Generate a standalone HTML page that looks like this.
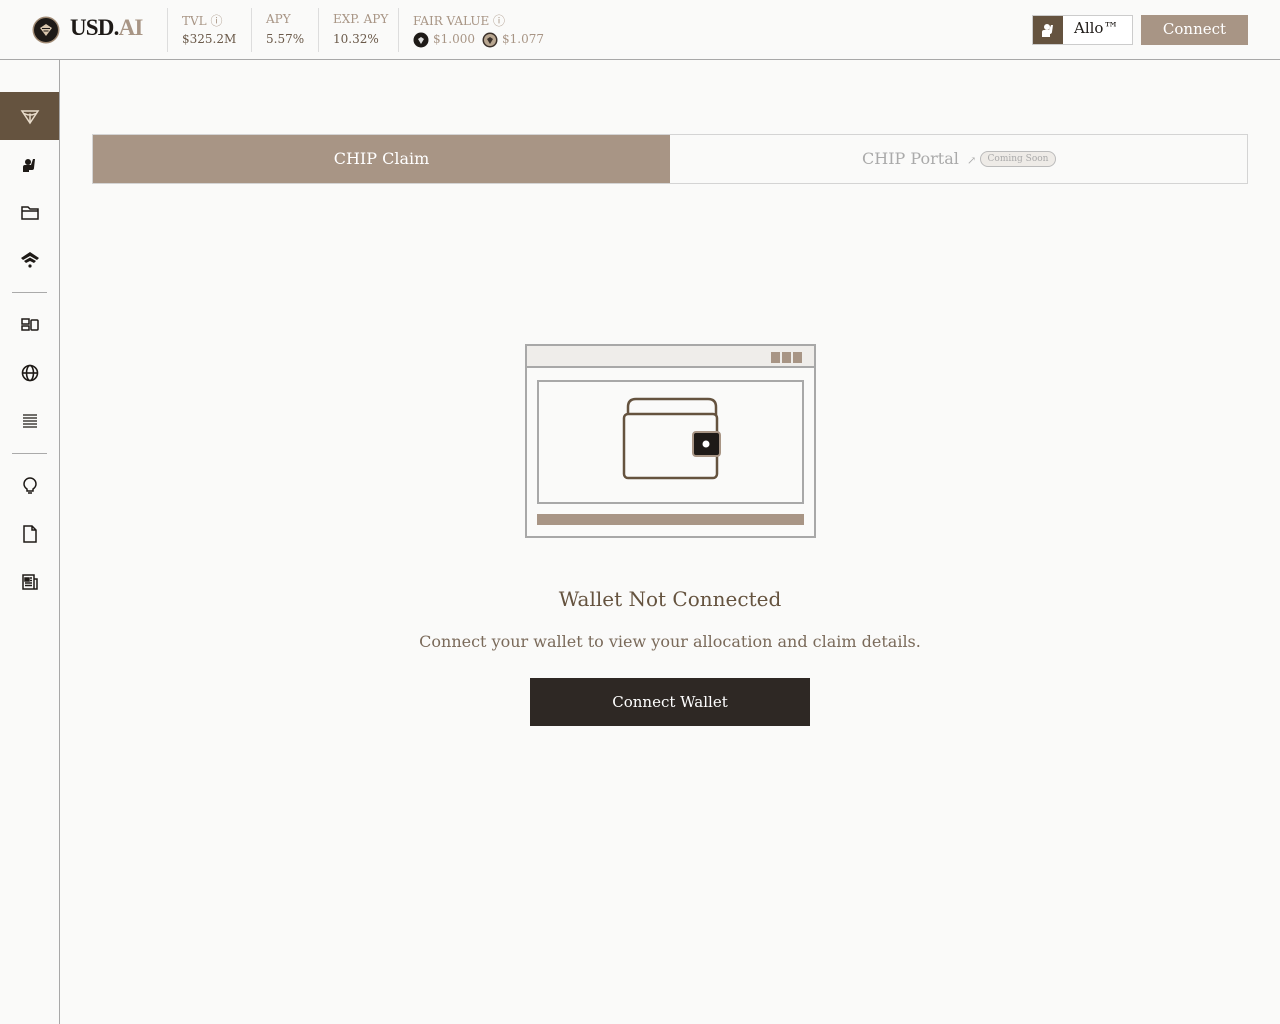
<!DOCTYPE html>
<html><head><meta charset="utf-8"><style>
*{margin:0;padding:0;box-sizing:border-box}
body{width:1280px;height:1024px;background:#fafaf9;font-family:"DejaVu Serif","Liberation Serif",serif;position:relative;overflow:hidden;color:#333}
.top{position:absolute;left:0;top:0;width:1280px;height:60px;border-bottom:1px solid #a8a8a8;background:#fafaf9}
.side{position:absolute;left:0;top:60px;width:60px;height:964px;border-right:1px solid #a8a8a8}
.abs{position:absolute;white-space:nowrap}
.lbl{font-size:12px;color:#a89585}
.val{font-size:12px;color:#6b5a4a}
.vsep{position:absolute;top:8px;width:1px;height:44px;background:#ddd}
.ic{position:absolute;left:20px;width:20px;height:20px}
</style></head><body>
<div class="top">
  <svg class="abs" style="left:32px;top:16px" width="28" height="28" viewBox="0 0 28 28"><circle cx="14" cy="14" r="13.5" fill="#a08a74"/><circle cx="14" cy="14" r="12" fill="#1e1a17"/><path d="M8 12 L14 8 L20 12 L14 20 Z" fill="#d9c6ad"/><path d="M10 12.5h8M11.5 15h5" stroke="#1e1a17" stroke-width="1"/></svg>
  <div class="abs" style="left:70px;top:15px;font-size:23px;letter-spacing:-0.8px;color:#1e1a17;font-weight:bold;font-family:'Liberation Serif',serif">USD.<span style="color:#a89585">AI</span></div>
  <div class="vsep" style="left:167px"></div>
  <div class="abs lbl" style="left:182px;top:12px">TVL ⓘ</div><div class="abs val" style="left:182px;top:32px">$325.2M</div>
  <div class="vsep" style="left:251px"></div>
  <div class="abs lbl" style="left:266px;top:12px">APY</div><div class="abs val" style="left:266px;top:32px">5.57%</div>
  <div class="vsep" style="left:318px"></div>
  <div class="abs lbl" style="left:333px;top:12px">EXP. APY</div><div class="abs val" style="left:333px;top:32px">10.32%</div>
  <div class="vsep" style="left:398px"></div>
  <div class="abs lbl" style="left:413px;top:12px">FAIR VALUE ⓘ</div>
  <svg class="abs" style="left:413px;top:32px" width="16" height="16"><circle cx="8" cy="8" r="7.5" fill="#1e1a17"/><path d="M5 7l3-2 3 2-3 5z" fill="#ddd"/></svg>
  <div class="abs" style="left:433px;top:32px;font-size:12px;color:#a89585">$1.000</div>
  <svg class="abs" style="left:482px;top:32px" width="16" height="16"><circle cx="8" cy="8" r="7.5" fill="#3a3029"/><circle cx="8" cy="8" r="6" fill="#b8a690"/><path d="M5 7l3-2 3 2-3 5z" fill="#3a3029"/></svg>
  <div class="abs" style="left:502px;top:32px;font-size:12px;color:#a89585">$1.077</div>
  <div class="abs" style="left:1032px;top:15px;width:101px;height:30px;border:1px solid #ccc;background:#fff"></div>
  <div class="abs" style="left:1033px;top:16px;width:30px;height:28px;background:#65533f"></div>
  <svg class="abs" style="left:1040px;top:21px" width="16" height="18"><circle cx="7" cy="6" r="3" fill="#fff"/><path d="M2 16v-5c0-1.5 1-2 2-2h5l2-5h2l-1 7c0 1-1 2-2 2v3z" fill="#fff"/></svg>
  <div class="abs" style="left:1074px;top:19px;font-size:15px;color:#1e1a17">Allo™</div>
  <div class="abs" style="left:1141px;top:15px;width:107px;height:30px;background:#a89585;color:#fff;font-size:15px;text-align:center;line-height:28px">Connect</div>
</div>
<div class="side">
  <div class="abs" style="left:0;top:32px;width:59px;height:48px;background:#65533f"></div>
  <svg class="ic" style="top:46px" viewBox="0 0 20 20" fill="none" stroke="#e8dccb" stroke-width="1.5"><path d="M2 5h16L10 17z"/><path d="M4 7.5q6 3 12 0M10 7.5v9"/></svg>
  <svg class="ic" style="top:95px" viewBox="0 0 20 20" fill="#1e1a17"><circle cx="8" cy="7" r="3"/><path d="M3 17v-5q0-2 2-2h6l2-6h2l-1 9q0 2-2 2H9v2z"/></svg>
  <svg class="ic" style="top:142px" viewBox="0 0 20 20" fill="none" stroke="#1e1a17" stroke-width="1.5"><path d="M2 5h6l2 2h8v10H2zM2 9h16"/></svg>
  <svg class="ic" style="top:190px" viewBox="0 0 20 20" fill="#1e1a17"><path d="M1 8l9-6 9 6-2 2-7-4-7 4z"/><path d="M4 11l6-3.5 6 3.5-2 2-4-2-4 2z"/><circle cx="10" cy="16" r="1.6"/></svg>
  <div class="abs" style="left:12px;top:232px;width:35px;height:1px;background:#aaa"></div>
  <svg class="ic" style="top:255px" viewBox="0 0 20 20" fill="none" stroke="#1e1a17" stroke-width="1.5"><rect x="2" y="4" width="7" height="5"/><rect x="2" y="11" width="7" height="4"/><rect x="11" y="5" width="7" height="10" rx="1"/></svg>
  <svg class="ic" style="top:303px" viewBox="0 0 20 20" fill="none" stroke="#1e1a17" stroke-width="1.6"><circle cx="10" cy="10" r="7.5"/><ellipse cx="10" cy="10" rx="3.5" ry="7.5"/><path d="M2.5 10h15"/></svg>
  <svg class="ic" style="top:351px" viewBox="0 0 20 20" stroke="#1e1a17" stroke-width="1.3"><path d="M3 4h14M3 7h14M3 10h14M3 13h14M3 16h14"/></svg>
  <div class="abs" style="left:12px;top:393px;width:35px;height:1px;background:#aaa"></div>
  <svg class="ic" style="top:416px" viewBox="0 0 20 20" fill="none" stroke="#1e1a17" stroke-width="1.5"><path d="M7 13q-3-2-3-5a6 6 0 0 1 12 0q0 3-3 5v2H7z"/><path d="M8 17h4"/></svg>
  <svg class="ic" style="top:464px" viewBox="0 0 20 20" fill="none" stroke="#1e1a17" stroke-width="1.5"><path d="M4 2h8l4 4v12H4zM12 2v4h4"/></svg>
  <svg class="ic" style="top:512px" viewBox="0 0 20 20" fill="none" stroke="#1e1a17" stroke-width="1.5"><path d="M3 3h11v14H3zM14 7h3v10h-3"/><rect x="5" y="6" width="4" height="3" fill="#1e1a17"/><path d="M10 6h2M10 8.5h2M5 11h7M5 13.5h7"/></svg>
</div>
<div class="abs" style="left:92px;top:134px;width:1156px;height:50px;border:1px solid #d4d4d4;background:#fafaf9"></div>
<div class="abs" style="left:93px;top:135px;width:577px;height:48px;background:#a89585;color:#fff;font-size:16px;text-align:center;line-height:48px">CHIP Claim</div>
<div class="abs" style="left:862px;top:149px;font-size:16px;color:#aaa">CHIP Portal <span style="font-size:11px;margin-left:3px">↗</span></div>
<div class="abs" style="left:980px;top:151px;width:76px;height:16px;border:1px solid #bbb;border-radius:8px;background:#eeebe7;font-size:9px;color:#aaa;text-align:center;line-height:14px">Coming Soon</div>
<div class="abs" style="left:525px;top:344px;width:291px;height:194px;border:2px solid #a8a8a8;background:#fafaf9"></div>
<div class="abs" style="left:527px;top:346px;width:287px;height:22px;background:#efedea;border-bottom:2px solid #a8a8a8"></div>
<div class="abs" style="left:771px;top:352px;width:9px;height:11px;background:#a89585"></div>
<div class="abs" style="left:782px;top:352px;width:9px;height:11px;background:#a89585"></div>
<div class="abs" style="left:793px;top:352px;width:9px;height:11px;background:#a89585"></div>
<div class="abs" style="left:537px;top:380px;width:267px;height:124px;border:2px solid #a8a8a8"></div>
<div class="abs" style="left:537px;top:514px;width:267px;height:11px;background:#a89585"></div>
<svg class="abs" style="left:620px;top:395px" width="105" height="88" viewBox="0 0 105 88" fill="none" stroke="#65533f" stroke-width="2.5"><path d="M8 28V12q0-8 8-8h72q8 0 8 8v16"/><rect x="4" y="19" width="93" height="64" rx="4" fill="#fafaf9"/><rect x="73" y="37" width="27" height="24" rx="3" fill="#1e1a17" stroke="#a89585" stroke-width="2"/><circle cx="86" cy="49" r="3.5" fill="#fff" stroke="none"/></svg>
<div class="abs" style="left:0;width:1340px;top:587px;text-align:center;font-size:20px;color:#65533f">Wallet Not Connected</div>
<div class="abs" style="left:0;width:1340px;top:632px;text-align:center;font-size:16px;color:#7a6a5a">Connect your wallet to view your allocation and claim details.</div>
<div class="abs" style="left:530px;top:678px;width:280px;height:48px;background:#2e2824;color:#fff;font-size:15px;text-align:center;line-height:48px">Connect Wallet</div>
</body></html>
